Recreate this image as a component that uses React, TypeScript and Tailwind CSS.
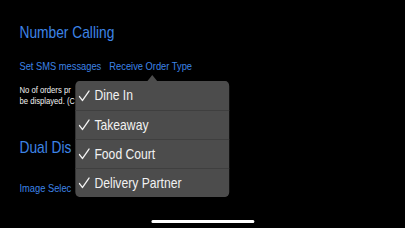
import React from "react";

const items = ["Dine In", "Takeaway", "Food Court", "Delivery Partner"];

function Check() {
  return (
    <svg width="14" height="12" viewBox="0 0 14 12" fill="none" className="shrink-0">
      <path d="M1 6.5 L4.8 10.5 L13 1" stroke="#f2f2f2" strokeWidth="1.5" strokeLinecap="round" strokeLinejoin="round" />
    </svg>
  );
}

export default function App() {
  return (
    <div className="w-[405px] h-[228px] overflow-hidden bg-black">
      <div
        className="relative w-[500px] h-[228px] bg-black origin-top-left [transform:scaleX(0.81)] px-[24px] pt-[23px]"
        style={{ fontFamily: '"Liberation Sans", Arial, sans-serif' }}
      >
        <div className="text-[17px] leading-[20px] text-[#3d84e6]">Number Calling</div>
        <div className="mt-[16px] flex gap-[10px] text-[11.5px] leading-[14px] text-[#3d84e6]">
          <span>Set SMS messages</span>
          <span>Receive Order Type</span>
        </div>
        <div className="mt-[11px] w-[68px] overflow-hidden text-[9.5px] leading-[11px] text-[#f2f2f2] whitespace-nowrap">
          <div>No of orders pr</div>
          <div>be displayed. (C</div>
        </div>
        <div className="mt-[32px] w-[68px] overflow-hidden whitespace-nowrap text-[17px] leading-[20px] text-[#3d84e6]">Dual Dis</div>
        <div className="mt-[23px] w-[68px] overflow-hidden whitespace-nowrap text-[11.5px] leading-[14px] text-[#3d84e6]">Image Selec</div>

        <div className="absolute left-[92.6px] top-[81px] w-[190px] rounded-[5px] bg-[#4c4c4c]">
          <div className="absolute left-[89px] top-[-6px] w-0 h-0 border-l-[6px] border-r-[6px] border-b-[6px] border-l-transparent border-r-transparent border-b-[#4c4c4c]" />
          {items.map((t, i) => (
            <div
              key={t}
              className={`flex h-[29px] items-center pl-[4px] gap-[6px] text-[15px] text-[#f2f2f2] ${i > 0 ? "border-t border-[#3f3f3f]" : ""}`}
            >
              <Check />
              <span>{t}</span>
            </div>
          ))}
        </div>

        <div className="absolute left-[186.5px] top-[220px] w-[127px] h-[3px] rounded-full bg-white" />
      </div>
    </div>
  );
}
